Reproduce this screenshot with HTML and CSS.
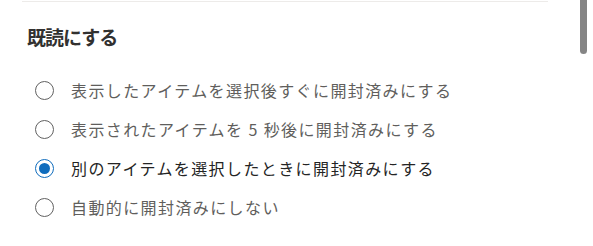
FILE: index.html
```html
<!DOCTYPE html>
<html lang="ja">
<head>
    <meta charset="UTF-8">
    <meta name="viewport" content="width=device-width, initial-scale=1.0">
    <title>既読にする</title>
    <link rel="stylesheet" href="styles.css">
</head>
<body>
    <div class="panel">
        <div class="divider"></div>
        <h2 class="section-title">既読にする</h2>
        <div class="options">
            <label class="option">
                <span class="radio"></span>
                <span class="label">表示したアイテムを選択後すぐに開封済みにする</span>
            </label>
            <label class="option">
                <span class="radio"></span>
                <span class="label">表示されたアイテムを 5 秒後に開封済みにする</span>
            </label>
            <label class="option selected">
                <span class="radio"></span>
                <span class="label">別のアイテムを選択したときに開封済みにする</span>
            </label>
            <label class="option">
                <span class="radio"></span>
                <span class="label">自動的に開封済みにしない</span>
            </label>
        </div>
    </div>
    <div class="scrollbar"></div>
</body>
</html>
```

FILE: styles.css
```css
body {
    margin: 0;
    background-color: #fff;
    font-family: "Noto Sans CJK JP", "Noto Sans", sans-serif;
    color: #323130;
    overflow: hidden;
}
.panel {
    width: 526px;
    padding: 1px 0 0 22px;
}
.divider {
    border-top: 1px solid #edebe9;
}
.section-title {
    margin: 0;
    padding: 22px 0 0 5px;
    font-size: 19px;
    font-weight: 600;
    line-height: 26px;
    letter-spacing: -1px;
    color: #323130;
}
.options {
    display: flex;
    flex-direction: column;
    gap: 16px;
    padding: 29px 0 0 13px;
}
.option {
    display: flex;
    align-items: center;
    gap: 17px;
    height: 23px;
}
.radio {
    box-sizing: border-box;
    width: 19px;
    height: 19px;
    border: 1px solid #616161;
    border-radius: 50%;
    display: flex;
    align-items: center;
    justify-content: center;
    flex-shrink: 0;
}
.label {
    font-size: 16px;
    letter-spacing: 1.4px;
    line-height: 23px;
    color: #605e5c;
}
.selected .radio {
    border-color: #0f6cbd;
}
.selected .radio::after {
    content: "";
    width: 11px;
    height: 11px;
    border-radius: 50%;
    background-color: #0f6cbd;
}
.selected .label {
    color: #242424;
}
.scrollbar {
    position: absolute;
    top: 0;
    left: 580px;
    width: 7px;
    height: 54px;
    background-color: #858585;
    border-radius: 0 0 4px 4px;
}
```
